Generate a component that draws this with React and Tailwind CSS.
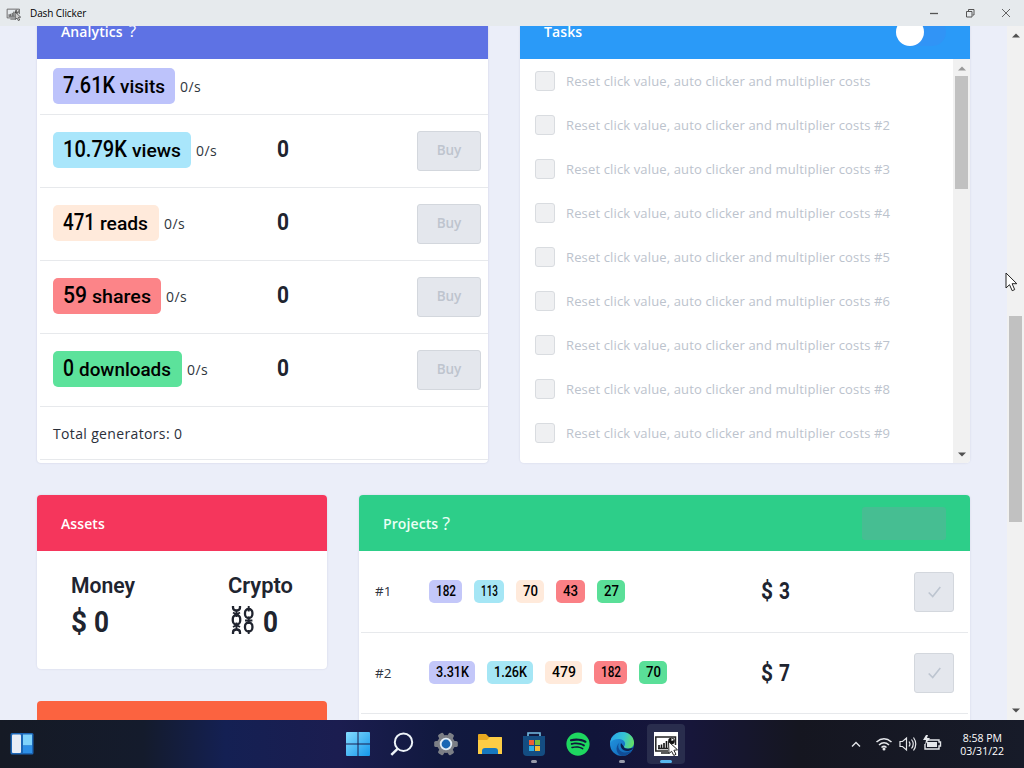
import React from "react";
import { FaSpotify } from "react-icons/fa";

const stats = [
  { n: "7.61K", label: "visits", bg: "bg-[#bdc3fb]", w: "w-[122px]", nw: 52, lw: 45 },
  { n: "10.79K", label: "views", bg: "bg-[#a9e6fb]", w: "w-[138px]", nw: 64, lw: 49 },
  { n: "471", label: "reads", bg: "bg-[#ffeadb]", w: "w-[106px]", nw: 32, lw: 48 },
  { n: "59", label: "shares", bg: "bg-[#fc8488]", w: "w-[108px]", nw: 24, lw: 59 },
  { n: "0", label: "downloads", bg: "bg-[#5ce29b]", w: "w-[129px]", nw: 11, lw: 92 },
];

const tasks = ["", " #2", " #3", " #4", " #5", " #6", " #7", " #8", " #9"];

const pillColors = ["bg-[#c3c7f9]", "bg-[#a5e6f5]", "bg-[#ffeadb]", "bg-[#fa8085]", "bg-[#5adf98]"];

const projects = [
  { id: "#1", price: "3", costs: [["182", "w-[33px]"], ["113", "w-[30px]"], ["70", "w-[28px]"], ["43", "w-[29px]"], ["27", "w-[28px]"]] },
  { id: "#2", price: "7", costs: [["3.31K", "w-[46px]"], ["1.26K", "w-[46px]"], ["479", "w-[37px]"], ["182", "w-[33px]"], ["70", "w-[28px]"]] },
];

// Text condensed or widened to an exact width, in the manner of a DIN face.
function Fit({ width, children, size, weight = 500, height = 26, color = "#000" }) {
  return (
    <svg width={width} height={height} className="block shrink-0 overflow-visible">
      <text
        x="0"
        y={height * 0.76}
        textLength={width}
        lengthAdjust="spacingAndGlyphs"
        fontFamily="Roboto, 'Liberation Sans', sans-serif"
        fontSize={size}
        fontWeight={weight}
        fill={color}
      >
        {children}
      </text>
    </svg>
  );
}

function Arrow({ up, color = "#505050" }) {
  return (
    <svg width="8" height="5" viewBox="0 0 8 5" className="block">
      <path d={up ? "M0 4.5 4 .5 8 4.5Z" : "M0 .5 4 4.5 8 .5Z"} fill={color} />
    </svg>
  );
}

function AppIcon({ size = 24, dim }) {
  return (
    <svg width={size} height={size} viewBox="0 0 24 24" className="block">
      <rect width="24" height="24" fill={dim ? "none" : "#fff"} />
      <path d="M21.500 13V5H1.800v14H14" fill="none" stroke={dim ? "#666" : "#222"} strokeWidth="1.5" />
      <path d="M5 16v-3M7.500 16v-3.500M10 16v-5M12.500 16V9" stroke={dim ? "#555" : "#111"} strokeWidth="1.6" />
      <path d="M4 16.500h10M7 21h8" stroke={dim ? "#555" : "#222"} strokeWidth="1.4" />
      <circle cx="17.500" cy="9" r="3.300" fill={dim ? "#666" : "#111"} />
      <path d="M17.500 9V6l2.500 2Z" fill="#fff" />
      <path d="m14.500 9.500.5 12 2.600-2.200 2.200 4.200 2.200-1.200-2.100-4 3.600-.5Z" fill={dim ? "#ccc" : "#fff"} stroke="#222" />
    </svg>
  );
}

function TitleBar() {
  return (
    <div className="flex h-[26px] shrink-0 items-center bg-[#e6eaed] pl-1.5">
      <AppIcon size={15} dim />
      <span className="ml-[9px] flex-1 text-[10px] leading-none tracking-[-0.1px] text-black">Dash Clicker</span>
      <svg width="96" height="26" viewBox="0 0 96 26" fill="none" stroke="#555" className="block">
        <path d="M2 13.500h8" strokeWidth="1.300" />
        <path d="M38.500 11.500h5.500v5.500h-5.500zM40.500 11v-1.500h5.500v5.500h-1.500" />
        <path d="m74 9 8 8m0-8-8 8" strokeWidth=".9" />
      </svg>
    </div>
  );
}

function Buy() {
  return (
    <button className="h-10 w-16 rounded-[3px] border border-[#d3d7dd] bg-[#e4e7ed] pb-0.5 text-[13.5px] font-semibold text-[#bec4ce]">Buy</button>
  );
}

function Analytics() {
  return (
    <section className="flex h-[437px] w-[451px] flex-col overflow-hidden rounded-b-[4px] bg-white shadow-[0_0_2px_rgba(60,70,120,.2)]">
      <header className="-mt-[23px] flex h-14 shrink-0 items-center bg-[#5e72e4] pl-6 text-[14px] font-semibold tracking-[0.1px] text-white">
        <span className="mt-px">Analytics</span><span className="ml-1.5 text-[17px] font-normal">?</span>
      </header>
      <div className="ml-[3px]">
        {stats.map((s, i) => (
          <div key={s.n} className={`flex border-b border-[#e7e9ec] pl-[13px] ${i === 0 ? "h-14 pt-[9px]" : "h-[73px] pt-[17px]"}`}>
            <div className="flex w-[224px] items-center self-start">
              <div className={`flex h-9 items-center gap-[5px] rounded-[5px] pl-[10px] ${s.w} ${s.bg}`}>
                <Fit width={s.nw} size={24}>{s.n}</Fit>
                <Fit width={s.lw} size={18.5}>{s.label}</Fit>
              </div>
              <span className="ml-[5px] mt-px text-[14px] tracking-[0.4px] text-[#303640]">0/s</span>
            </div>
            {i > 0 && (
              <>
                <div className="w-[140px] pt-[5px]"><Fit width={12} size={23} weight={700} color="#20242f">0</Fit></div>
                <div className="-mt-px"><Buy /></div>
              </>
            )}
          </div>
        ))}
        <div className="flex h-[53px] items-center border-b border-[#e7e9ec] pl-[13px] text-[14px] tracking-[0.35px] text-[#2b303b]">Total generators: 0</div>
      </div>
    </section>
  );
}

function Tasks() {
  return (
    <section className="flex h-[437px] w-[450px] flex-col overflow-hidden rounded-b-[4px] bg-white shadow-[0_0_2px_rgba(60,70,120,.15)]">
      <header className="-mt-[23px] flex h-14 shrink-0 items-center bg-[#2a9af8] pl-6 pr-6 text-[14px] font-semibold tracking-[0.1px] text-white">
        <span className="mt-px flex-1">Tasks</span>
        <span className="mt-0.5 flex h-7 w-[50px] rounded-full bg-[#3194f6]"><i className="h-7 w-7 rounded-full bg-white" /></span>
      </header>
      <div className="flex min-h-0 flex-1">
        <div className="flex flex-1 flex-col gap-6 pl-[15px] pt-3">
          {tasks.map((t) => (
            <div key={t} className="flex h-5 shrink-0 items-center">
              <span className="h-5 w-5 rounded-[3px] border border-[#d9dce0] bg-[#eff0f2]" />
              <span className="ml-[11px] mt-0.5 whitespace-nowrap text-[13px] font-medium tracking-[0.14px] text-[#bcc3cd]">Reset click value, auto clicker and multiplier costs{t}</span>
            </div>
          ))}
        </div>
        <div className="flex w-[17px] flex-col items-center bg-[#f1f1f1] pb-1.5 pt-[7px]">
          <Arrow up color="#999" />
          <div className="mt-[5px] h-[113px] w-[13px] bg-[#c1c1c1]" />
          <div className="flex-1" />
          <Arrow />
        </div>
      </div>
    </section>
  );
}

function Chains() {
  return (
    <svg width="24" height="28" viewBox="0 0 24 28" fill="none" stroke="#20242f" strokeWidth="2.300" className="block">
      <path d="M2 0v1.500q0 3 3.500 3t3.500-3V0M2 28v-1.500q0-3 3.500-3t3.500 3V28" />
      <rect x="1.800" y="9" width="7.400" height="9.500" rx="3.700" />
      <rect x="14" y="3" width="7.400" height="9" rx="3.700" />
      <rect x="14" y="16.500" width="7.400" height="9" rx="3.700" />
      <path d="M17.700 0v5.500m0 5V18m0 6v4M5.500 4v7m0 5.500V24M2 6.500l3.500 2L9 6.500M2 21l3.500-2L9 21M14 14.500h7.400" strokeWidth="1.900" />
    </svg>
  );
}

function LeftColumn() {
  return (
    <div className="flex w-[290px] flex-col gap-8">
      <section className="h-[174px] shrink-0 overflow-hidden rounded-[4px] bg-white shadow-[0_0_2px_rgba(60,70,120,.15)]">
        <header className="flex h-14 items-center bg-[#f5365c] pl-6 pt-px text-[14px] font-semibold tracking-[0.1px] text-white">Assets</header>
        <div className="flex pl-[34px] pt-[22px]">
          <div className="w-[157px]">
            <Fit width={64} size={22.5} weight={600} color="#20242f">Money</Fit>
            <div className="mt-[10px] flex gap-[7px]">
              <Fit width={16} size={30} weight={700} height={30} color="#20242f">$</Fit>
              <Fit width={15} size={30} weight={700} height={30} color="#20242f">0</Fit>
            </div>
          </div>
          <div>
            <Fit width={65} size={22.5} weight={600} color="#20242f">Crypto</Fit>
            <div className="mt-[10px] flex gap-[8px] pl-[3px]">
              <div className="-mt-[3px]"><Chains /></div>
              <Fit width={15} size={30} weight={700} height={30} color="#20242f">0</Fit>
            </div>
          </div>
        </div>
      </section>
      <section className="h-14 shrink-0 rounded-t-[4px] bg-[#fb6340]" />
    </div>
  );
}

function Projects() {
  return (
    <section className="h-[260px] w-[611px] shrink-0 overflow-hidden rounded-t-[4px] bg-white shadow-[0_0_2px_rgba(60,70,120,.15)]">
      <header className="flex h-14 items-center bg-[#2dce89] pl-6 pr-6 text-[14px] font-semibold tracking-[0.1px] text-[#eafff5]">
        <span className="pt-px">Projects</span><span className="ml-1 flex-1 text-[18px] font-normal">?</span>
        <span className="h-[33px] w-[84px] rounded-[3px] bg-[#46be92]" />
      </header>
      {projects.map((p, i) => (
        <div key={p.id} className={`ml-0.5 mr-0.5 flex items-center border-b border-[#e7e9ec] pl-3.5 pr-3.5 ${i === 0 ? "h-[82px]" : "h-[81px]"}`}>
          <span className="w-[54px] text-[13.500px] text-[#30353f]">{p.id}</span>
          <div className={`flex w-[332px] gap-3 ${i === 0 ? "-mt-px" : "-mt-0.5"}`}>
            {p.costs.map(([v, w], j) => (
              <span key={j} className={`flex h-[23px] items-center justify-center rounded-[5px] ${w} ${pillColors[j]}`}>
                <Fit width={v.length === 5 ? 33 : v === "479" ? 24 : v === "113" ? 17 : v.length === 3 ? 20 : 15} size={15.500} height={19}>{v}</Fit>
              </span>
            ))}
          </div>
          <div className="mt-px flex flex-1 gap-1.5">
            <Fit width={12} size={23} weight={700} color="#20242f">$</Fit>
            <Fit width={11} size={23} weight={700} color="#20242f">{p.price}</Fit>
          </div>
          <button className="flex h-10 w-10 items-center justify-center rounded-[3px] border border-[#d3d7dd] bg-[#e4e7ed]">
            <svg width="13" height="12" viewBox="0 0 13 12" fill="none" stroke="#bdc5d0" strokeWidth="1.600"><path d="m.7 6.500 4 4L12.300 1" /></svg>
          </button>
        </div>
      ))}
    </section>
  );
}

function Gear() {
  return (
    <svg width="24" height="24" viewBox="0 0 24 24">
      <g fill="#7c7f86">
        <circle cx="12" cy="12" r="9" />
        {[0, 60, 120].map((a) => <rect key={a} x="9" y=".2" width="6" height="23.600" rx="1.600" transform={`rotate(${a + 30} 12 12)`} />)}
      </g>
      <circle cx="12" cy="12" r="5.300" fill="#1966b3" stroke="#e2edf6" strokeWidth="1.800" />
    </svg>
  );
}

function Edge() {
  return (
    <svg width="24" height="24" viewBox="0 0 24 24">
      <defs>
        <linearGradient id="edgeTop" x1="0" y1=".3" x2="1" y2=".5"><stop stopColor="#2aa6e8" /><stop offset=".55" stopColor="#35c4d4" /><stop offset="1" stopColor="#64df65" /></linearGradient>
        <linearGradient id="edgeLow" x1="0" y1="0" x2="1" y2="1"><stop stopColor="#249be5" /><stop offset="1" stopColor="#0d5eaf" /></linearGradient>
      </defs>
      <circle cx="12" cy="12" r="12" fill="url(#edgeLow)" />
      <path d="M.1 11C.7 4.700 5.700 0 12 0c7 0 12 5 12 10.500 0 4-3 6-6 6-2.600 0-4-.8-4-1.700 0-.6 1.100-1.200 1.100-3C15.100 9 12 7 8.500 7 4.500 7 1.500 8.500.1 11Z" fill="url(#edgeTop)" />
      <path d="M9.500 10.500c-3 4 0 10 5.500 10 3 0 5-1 6.500-2-2 3.500-5.500 5.500-9.500 5.500-5-1.500-8-8-2.500-13.500Z" fill="#104d97" />
      <path d="M11 11c-1.500 4 1.500 8 6 8 2 0 3.700-.7 5-1.500l1.600-2.200c-1.600 1-3.500 1.400-5.600 1.400-3 0-4.500-1-4.200-2.200Z" fill="#0b2050" />
    </svg>
  );
}

function Slot({ children, run }) {
  return (
    <div className="flex h-10 w-11 flex-col items-center pt-2">
      {children}
      {run && <i className="mt-1 h-[3px] w-1.5 shrink-0 rounded-full bg-[#989baa]" />}
    </div>
  );
}

function Taskbar() {
  return (
    <footer className="flex h-12 shrink-0 items-start bg-[linear-gradient(90deg,#151a25_0%,#141b2c_14%,#142053_22%,#1b1d50_33%,#11193f_43%,#11153a_58%,#17163b_67%,#151620_78%,#171b29_100%)] pt-1">
      <div className="w-[336px] pl-[10px] pt-2">
        <svg width="24" height="24" viewBox="0 0 24 24">
          <rect x=".5" y="1" width="23" height="21.500" rx="1.500" fill="#1c66b5" /><rect x="2" y="2.500" width="9" height="18.500" rx="1" fill="#e7edf6" />
          <path d="M13 2.500h9v11h-9z" fill="#80d3fb" /><path d="M13 13.500h9V21h-9z" fill="#2d8fe6" />
        </svg>
      </div>
      <Slot>
        <svg width="24" height="24" viewBox="0 0 24 24"><defs><linearGradient id="win" x1="0" y1="0" x2="1" y2="1"><stop stopColor="#84dcff" /><stop offset="1" stopColor="#1597eb" /></linearGradient></defs><path d="M0 1q0-1 1-1h10.500v11.500H0ZM12.500 0H23q1 0 1 1v10.500H12.500ZM0 12.500h11.500V24H1q-1 0-1-1ZM12.500 12.500H24V23q0 1-1 1H12.500Z" fill="url(#win)" /></svg>
      </Slot>
      <Slot><svg width="24" height="24" viewBox="0 0 24 24" fill="none" stroke="#edf3f8" strokeWidth="2"><circle cx="13.500" cy="10.200" r="8.700" /><path d="m7.500 16.800-6.200 6" strokeWidth="2.500" /></svg></Slot>
      <Slot><Gear /></Slot>
      <Slot>
        <svg width="24" height="24" viewBox="0 0 24 24"><path d="M0 3q0-1 1-1h7l3 3h12q1 0 1 1v16H0Z" fill="#e8a820" /><path d="M0 8h9l3-3h11q1 0 1 1v16H0Z" fill="#fdcd45" /><path d="M4 22v-3q0-3 3-3h10q3 0 3 3v3Z" fill="#1678bf" /></svg>
      </Slot>
      <Slot run>
        <svg width="24" height="24" viewBox="0 0 24 24"><path d="M6 5V1h12v4" fill="none" stroke="#75bce2" strokeWidth="1.600" /><path d="M1 4h22v16q0 4-4 4H5q-4 0-4-4Z" fill="#144d82" /><path d="M7 8h5v5H7z" fill="#ed5e35" /><path d="M13 8h5v5h-5z" fill="#7bbd3a" /><path d="M7 14h5v5H7z" fill="#31aee5" /><path d="M13 14h5v5h-5z" fill="#f4bb33" /></svg>
      </Slot>
      <Slot><FaSpotify size={24} color="#1ed760" /></Slot>
      <Slot run><Edge /></Slot>
      <div className="ml-[3px] flex h-10 w-[38px] flex-col items-center rounded-[4px] bg-[#292d4d] pt-2">
        <AppIcon />
        <i className="mt-1 h-[3px] w-3 shrink-0 rounded-full bg-[#58b8ef]" />
      </div>
      <div className="flex h-10 flex-1 items-center justify-end pr-5 text-white">
        <svg width="94" height="24" viewBox="0 0 94 24" fill="none" stroke="#e4e6ea" strokeWidth="1.400" className="mr-[17px] block">
          <path d="m3 14.500 4-4 4 4" />
          <path d="M27.500 10Q35 3.500 42.500 10M30 13q5-4.500 10 0M32.500 15.500q2.500-2.200 5 0" strokeWidth="1.600" /><circle cx="35" cy="17" r="1.500" fill="#e4e6ea" stroke="none" />
          <path d="M51 9.500h2.500l4-3.500v12l-4-3.500H51ZM60 9.500q2 2.500 0 5M62.500 7.500q3.500 4.500 0 9M64.500 5.500q4.500 6.500 0 13" strokeWidth="1.200" />
          <path d="M78 8h12v2h1.500v4H90v3H76v-5" /><path d="M78 10h10v5H78z" fill="#e4e6ea" stroke="none" /><path d="m77 3-3 5h3l-1 5 5-7h-3l1-3Z" fill="#e4e6ea" stroke="none" />
        </svg>
        <div className="flex flex-col items-end pt-px text-[10.500px] leading-[13px]"><span className="mr-0.5">8:58 PM</span><span>03/31/22</span></div>
      </div>
    </footer>
  );
}

export default function App() {
  return (
    <div className="relative flex h-[768px] w-[1024px] flex-col overflow-hidden bg-[#ebeef9] font-['Open_Sans','Noto_Sans',sans-serif]">
      <TitleBar />
      <div className="flex min-h-0 flex-1">
        <main className="flex flex-1 flex-col gap-8 overflow-hidden pl-[37px]">
          <div className="flex shrink-0 gap-8"><Analytics /><Tasks /></div>
          <div className="flex gap-8"><LeftColumn /><Projects /></div>
        </main>
        <div className="flex w-[17px] flex-col items-center bg-[#f1f1f1] pb-[7px] pt-[7px]">
          <Arrow up />
          <div className="mt-[278px] h-[206px] w-[13px] bg-[#c1c1c1]" />
          <div className="flex-1" />
          <Arrow />
        </div>
      </div>
      <Taskbar />
      <svg width="14" height="21" viewBox="0 0 14 21" className="absolute left-[1005px] top-[272px]"><path d="M1 1v15l3.500-3.300 2.700 6 2.500-1.100-2.600-5.900h4.700Z" fill="#fff" stroke="#222" /></svg>
    </div>
  );
}
